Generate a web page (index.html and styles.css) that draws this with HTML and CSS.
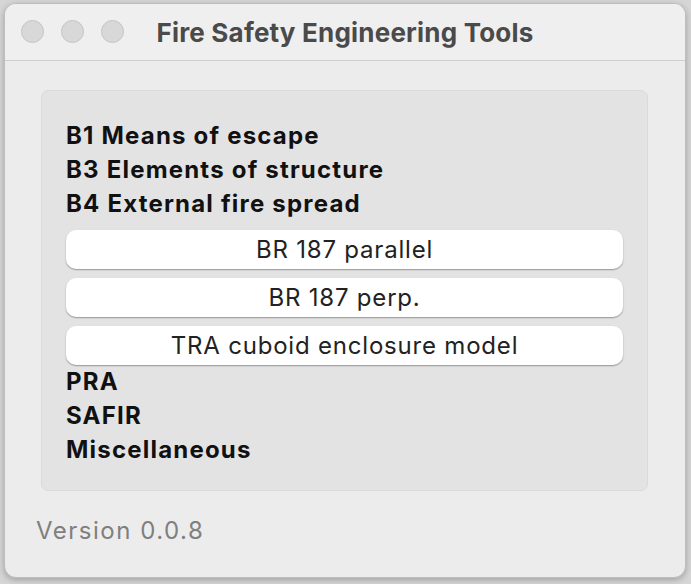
FILE: index.html
```html
<!DOCTYPE html>
<html>
<head>
<meta charset="utf-8">
<link rel="stylesheet" href="styles.css">
</head>
<body>
<div class="window">
  <div class="titlebar">
    <div class="lights">
      <span class="light"></span>
      <span class="light"></span>
      <span class="light"></span>
    </div>
    <div class="title">Fire Safety Engineering Tools</div>
  </div>
  <div class="content">
    <div class="group">
      <div class="heading">B1 Means of escape</div>
      <div class="heading">B3 Elements of structure</div>
      <div class="heading">B4 External fire spread</div>
      <div class="buttons">
        <button class="btn">BR 187 parallel</button>
        <button class="btn">BR 187 perp.</button>
        <button class="btn">TRA cuboid enclosure model</button>
      </div>
      <div class="heading">PRA</div>
      <div class="heading">SAFIR</div>
      <div class="heading">Miscellaneous</div>
    </div>
    <div class="version">Version 0.0.8</div>
  </div>
</div>
</body>
</html>
```
FILE: styles.css
```css
html, body {
  margin: 0;
  padding: 0;
}
body {
  width: 691px;
  height: 584px;
  background: #d6d6d6;
  font-family: Inter, "Liberation Sans", sans-serif;
  overflow: hidden;
}
.window {
  margin: 3px 0 0 4px;
  width: 682px;
  height: 575px;
  box-sizing: border-box;
  background: #ececec;
  border: 1px solid #bdbdbd;
  border-radius: 12px;
  box-shadow: 0 2px 6px rgba(0,0,0,0.25);
  overflow: hidden;
}
.titlebar {
  height: 56px;
  display: flex;
  align-items: center;
  justify-content: center;
  background: #f0efef;
  border-bottom: 1px solid #cfcfcf;
  position: relative;
}
.lights {
  position: absolute;
  left: 16px;
  top: 16px;
  display: flex;
  gap: 17px;
}
.light {
  width: 23px;
  height: 23px;
  border-radius: 50%;
  background: #d9d8d8;
  border: 1px solid #c6c5c5;
  box-sizing: border-box;
}
.title {
  font-size: 26px;
  font-weight: 700;
  color: #4a4a4a;
  letter-spacing: 0.2px;
}
.content {
  padding: 29px 37px 0 36px;
}
.group {
  background: #e3e3e3;
  border: 1px solid #dadada;
  border-radius: 7px;
  height: 401px;
  box-sizing: border-box;
  padding: 28px 24px 0 24px;
  display: flex;
  flex-direction: column;
}
.heading {
  font-size: 24px;
  font-weight: 700;
  color: #111;
  height: 34px;
  line-height: 34px;
  letter-spacing: 1.2px;
}
.buttons {
  display: flex;
  flex-direction: column;
  gap: 9px;
  padding: 9px 0 0 0;
}
.btn {
  height: 39px;
  border: none;
  border-radius: 10px;
  background: #ffffff;
  box-shadow: 0 1px 1.5px rgba(0,0,0,0.35);
  font-family: Inter, "Liberation Sans", sans-serif;
  font-size: 24px;
  letter-spacing: 0.8px;
  color: #222;
  padding: 0;
}
.version {
  margin: 25px 0 0 -5px;
  font-size: 24px;
  line-height: 29px;
  letter-spacing: 1.5px;
  color: #7f7f7f;
}
```
